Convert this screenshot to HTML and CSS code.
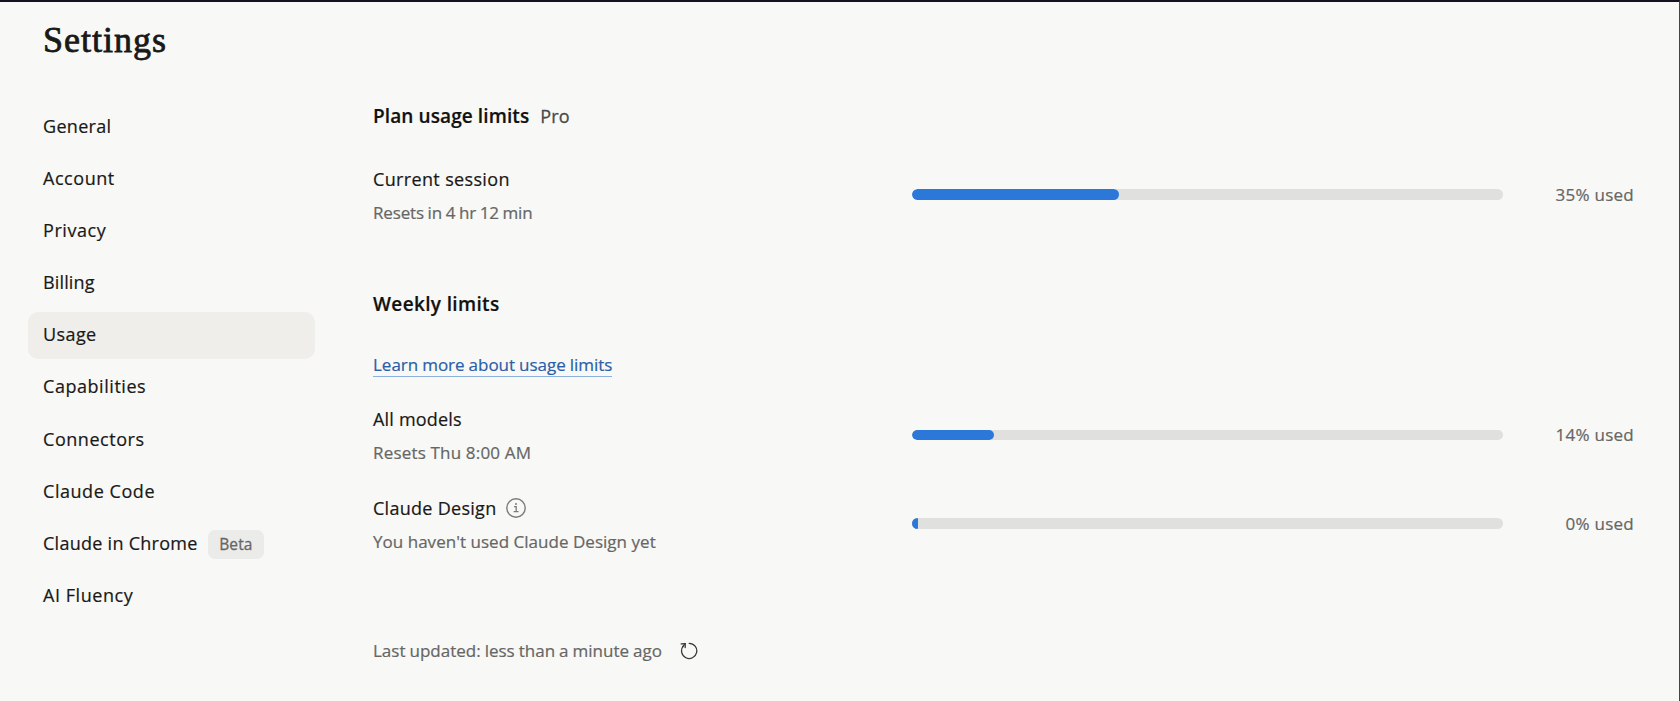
FILE: index.html
```
<!DOCTYPE html>
<html lang="en">
<head>
    <meta charset="UTF-8">
    <meta name="viewport" content="width=device-width, initial-scale=1.0">
    <title>Settings</title>
    <link rel="stylesheet" href="styles.css">
</head>
<body>
    <h1>Settings</h1>
    <div class="container">
        <nav class="sidebar">
            <a class="menu-item general">General</a>
            <a class="menu-item account">Account</a>
            <a class="menu-item privacy">Privacy</a>
            <a class="menu-item billing">Billing</a>
            <a class="menu-item usage active">Usage</a>
            <a class="menu-item capabilities">Capabilities</a>
            <a class="menu-item connectors">Connectors</a>
            <a class="menu-item code">Claude Code</a>
            <a class="menu-item chrome"><span>Claude in Chrome</span><span class="badge">Beta</span></a>
            <a class="menu-item fluency">AI Fluency</a>
        </nav>

        <main class="content">
            <h2 class="plan-title"><span>Plan usage limits</span><span class="plan">Pro</span></h2>
            <div class="limit">
                <div class="info">
                    <div class="label session">Current session</div>
                    <div class="note session-note">Resets in 4 hr 12 min</div>
                </div>
                <div class="bar"><div class="fill" style="width: 35%"></div></div>
                <div class="percent">35% used</div>
            </div>

            <h2 class="weekly-title">Weekly limits</h2>
            <div class="learn-more"><a class="link">Learn more about usage limits</a></div>
            <div class="limit">
                <div class="info">
                    <div class="label models">All models</div>
                    <div class="note models-note">Resets Thu 8:00 AM</div>
                </div>
                <div class="bar"><div class="fill" style="width: 14%"></div></div>
                <div class="percent">14% used</div>
            </div>
            <div class="limit">
                <div class="info">
                    <div class="label design">
                        <span>Claude Design</span>
                        <svg class="info-icon" width="20" height="20" viewBox="0 0 20 20" fill="none" stroke="#7b7b79">
                            <circle cx="10" cy="10" r="9.2" stroke-width="1.4"/>
                            <path d="M8 8.6h2.2v5M7.6 13.7h5" stroke-width="1.3"/>
                            <circle cx="10" cy="6" r="1" fill="#7b7b79" stroke="none"/>
                        </svg>
                    </div>
                    <div class="note design-note">You haven't used Claude Design yet</div>
                </div>
                <div class="bar"><div class="fill empty"></div></div>
                <div class="percent">0% used</div>
            </div>

            <div class="updated">
                <span>Last updated: less than a minute ago</span>
                <svg width="18" height="18" viewBox="0 0 18 18" fill="none" stroke="#3a3a38" stroke-width="1.3" stroke-linecap="round" stroke-linejoin="round">
                    <path d="M9.2 1.3A7.6 7.6 0 1 1 3.2 4.2"/>
                    <path d="M1.2 1.9L5.2 1.6L5.2 5.6"/>
                    <path d="M5.2 1.6L2.6 4.8"/>
                </svg>
            </div>
        </main>
    </div>
</body>
</html>
```
FILE: styles.css
```
* {
    box-sizing: border-box;
}
body {
    font-family: "Open Sans", sans-serif;
    margin: 0;
    height: 701px;
    overflow: hidden;
    background-color: #f8f8f6;
    color: #191918;
    border-top: 2px solid #17101f;
    border-right: 1px solid #454547;
}
h1 {
    margin: 0;
    padding: 18px 0 0 43px;
    height: 101px;
    font-family: "Liberation Serif", serif;
    font-size: 36px;
    font-weight: normal;
    line-height: 40px;
    letter-spacing: 1px;
    -webkit-text-stroke: 0.8px #191918;
}
.container {
    display: flex;
    gap: 58px;
    padding-left: 28px;
}
.sidebar {
    display: flex;
    flex-direction: column;
    gap: 5.7px;
    width: 287px;
    padding-top: 0.3px;
}
.menu-item {
    display: flex;
    align-items: center;
    height: 46.5px;
    padding: 0 15px 2px;
    font-size: 18px;
    letter-spacing: 0.55px;
    border-radius: 10px;
    -webkit-text-stroke: 0.2px #191918;
}
.general {
    letter-spacing: 0.3px;
}
.billing {
    letter-spacing: 0.15px;
}
.usage {
    letter-spacing: 0.4px;
}
.chrome {
    letter-spacing: 0.27px;
}
.active {
    background-color: #efeeea;
}
.badge {
    margin: 2px 0 0 10.5px;
    padding: 0 11px;
    height: 29px;
    line-height: 29px;
    font-size: 15.5px;
    letter-spacing: 0.15px;
    border-radius: 7px;
    background-color: #ebebea;
    color: #666664;
    -webkit-text-stroke: 0.3px #666664;
}
.content {
    width: 1261px;
}
h2 {
    margin: 0;
    font-size: 19px;
    font-weight: 600;
    line-height: 28px;
    letter-spacing: 0.1px;
    color: #111110;
    -webkit-text-stroke: 0.2px #111110;
}
.plan-title {
    display: flex;
    gap: 11px;
    margin: -1px 0 36.5px;
}
.plan {
    font-size: 18px;
    font-weight: 500;
    color: #4a4a48;
    -webkit-text-stroke: 0.3px #4a4a48;
}
.limit {
    display: flex;
    align-items: center;
    height: 56px;
    margin-bottom: 32.7px;
}
.info {
    display: flex;
    flex-direction: column;
    gap: 12px;
    width: 538.7px;
}
.label {
    display: flex;
    align-items: center;
    gap: 10px;
    font-size: 18px;
    line-height: 24px;
    letter-spacing: 0.28px;
    -webkit-text-stroke: 0.2px #191918;
}
.session {
    letter-spacing: 0.35px;
}
.models {
    letter-spacing: 0.2px;
}
.note {
    font-size: 17px;
    line-height: 20px;
    color: #666664;
    -webkit-text-stroke: 0.2px #666664;
}
.session-note {
    letter-spacing: -0.15px;
    word-spacing: -0.6px;
}
.models-note {
    letter-spacing: 0.18px;
}
.design-note {
    letter-spacing: 0.03px;
}
.bar {
    width: 591.3px;
    height: 10.6px;
    border-radius: 6px;
    background-color: #e0e0de;
    overflow: hidden;
}
.fill {
    height: 100%;
    border-radius: 6px;
    background-color: #2c78d8;
}
.empty {
    width: 6px;
    border-radius: 0 1px 1px 0;
}
.percent {
    width: 131px;
    text-align: right;
    font-size: 17px;
    line-height: 24px;
    letter-spacing: 0.25px;
    color: #666664;
    -webkit-text-stroke: 0.2px #666664;
}
.weekly-title {
    margin: 67.1px 0 35px;
    letter-spacing: 0.36px;
}
.learn-more {
    height: 24px;
    margin-bottom: 30.3px;
    font-size: 17px;
    line-height: 23px;
}
.link {
    color: #2b5ea8;
    word-spacing: -0.5px;
    border-bottom: 1px solid #8eb0dc;
    -webkit-text-stroke: 0.2px #2b5ea8;
}
.updated {
    display: flex;
    align-items: center;
    gap: 18px;
    margin-top: 87.3px;
    font-size: 17px;
    line-height: 24px;
    word-spacing: -0.4px;
    color: #666664;
    -webkit-text-stroke: 0.2px #666664;
}
```
